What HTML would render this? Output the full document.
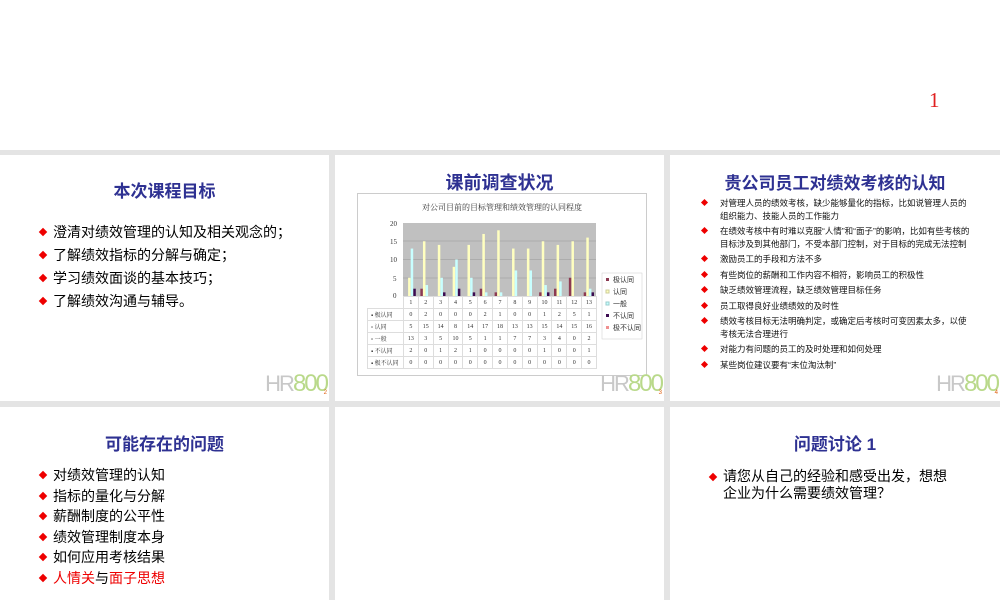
<!DOCTYPE html>
<html><head><meta charset="utf-8"><style>
body{margin:0;width:1000px;height:600px;background:#e4e4e4;position:relative;overflow:hidden;font-family:"Liberation Sans","Noto Sans CJK SC",sans-serif}
.p{position:absolute;background:#fff;overflow:hidden}
.t{position:absolute;left:0;right:0;text-align:center;color:#2e3192;font-weight:bold;font-size:17px}
.l{position:absolute;font-size:14px;color:#000;line-height:23px}
.l div{position:relative;padding-left:13px}
.d{position:absolute;left:0;top:8px;width:6px;height:6px;background:#e00;transform:rotate(45deg)}
.s{position:absolute;left:30px;top:42px;width:272px;font-size:8.5px;line-height:12.5px;color:#111}
.s div{position:relative;padding-left:20px;margin-bottom:3px}
.s .d{left:2px;top:3px;width:5px;height:5px}
.logo{position:absolute;right:2px;bottom:3px;font-size:22px;color:#c8c8c8;letter-spacing:-2px}
.logo b{color:#b9d98a;font-weight:normal;font-size:24px}
.logo i{position:absolute;right:2px;bottom:2px;font-size:6px;color:#e06010;font-style:normal}
table{border-collapse:collapse;font-family:"Liberation Serif","Noto Serif CJK SC",serif;font-size:6px;color:#333;table-layout:fixed}
td{border:1px solid #ddd;height:12px;text-align:center;padding:0;width:14.85px;box-sizing:border-box}
td.h{width:36px;text-align:left;padding-left:3px;white-space:nowrap}
</style></head><body>
<div class="p" style="left:0;top:0;width:1000px;height:150px"><div style="position:absolute;left:929px;top:88px;color:#e02020;font-family:'Liberation Serif',serif;font-size:21px">1</div></div>

<div class="p" style="left:0;top:155px;width:329px;height:246px">
<div class="t" style="top:22px">本次课程目标</div>
<div class="l" style="left:40px;top:66px">
<div><span class="d"></span>澄清对绩效管理的认知及相关观念的；</div>
<div><span class="d"></span>了解绩效指标的分解与确定；</div>
<div><span class="d"></span>学习绩效面谈的基本技巧；</div>
<div><span class="d"></span>了解绩效沟通与辅导。</div></div>
<div class="logo">HR<b>800</b><i>2</i></div></div>

<div class="p" style="left:335px;top:155px;width:329px;height:246px">
<div class="t" style="top:14px;font-size:18px">课前调查状况</div>
<div style="position:absolute;left:22px;top:38px;width:288px;height:181px;border:1px solid #ccc">
<div style="position:absolute;top:8px;left:0;right:0;text-align:center;font-family:'Liberation Serif','Noto Serif CJK SC',serif;font-size:8px;color:#333">对公司目前的目标管理和绩效管理的认同程度</div>
<svg id="ch" width="288" height="181" style="position:absolute;left:0;top:0" font-family="Liberation Serif" font-size="7" fill="#333">
<rect x="45" y="29" width="193" height="73" fill="#c0c0c0"/>
<g stroke="#999" stroke-width="0.5"><line x1="45" y1="47" x2="238" y2="47"/><line x1="45" y1="65.5" x2="238" y2="65.5"/><line x1="45" y1="84" x2="238" y2="84"/></g>
<text x="32" y="32">20</text><text x="32" y="50">15</text><text x="32" y="68">10</text><text x="35" y="87">5</text><text x="35" y="104">0</text>
<g id="bars"></g>
<rect x="244" y="79" width="40" height="66" fill="#fff" stroke="#ccc" stroke-width="0.5"/>
<rect x="248" y="84" width="3" height="3" fill="#8b3a52"/><text x="255" y="88">极认同</text>
<rect x="248" y="96" width="3" height="3" fill="#ffffc0" stroke="#cc9"/><text x="255" y="100">认同</text>
<rect x="248" y="108" width="3" height="3" fill="#c8ffff" stroke="#9cc"/><text x="255" y="112">一般</text>
<rect x="248" y="120" width="3" height="3" fill="#3c0c50"/><text x="255" y="124">不认同</text>
<rect x="248" y="132" width="3" height="3" fill="#f09090"/><text x="255" y="136">极不认同</text>
</svg>
<table style="position:absolute;left:9px;top:102px;width:229px">
<tr><td class="h" style="border:none"></td><td>1</td><td>2</td><td>3</td><td>4</td><td>5</td><td>6</td><td>7</td><td>8</td><td>9</td><td>10</td><td>11</td><td>12</td><td>13</td></tr>
<tr><td class="h">▪ 极认同</td><td>0</td><td>2</td><td>0</td><td>0</td><td>0</td><td>2</td><td>1</td><td>0</td><td>0</td><td>1</td><td>2</td><td>5</td><td>1</td></tr>
<tr><td class="h">▫ 认同</td><td>5</td><td>15</td><td>14</td><td>8</td><td>14</td><td>17</td><td>18</td><td>13</td><td>13</td><td>15</td><td>14</td><td>15</td><td>16</td></tr>
<tr><td class="h">▫ 一般</td><td>13</td><td>3</td><td>5</td><td>10</td><td>5</td><td>1</td><td>1</td><td>7</td><td>7</td><td>3</td><td>4</td><td>0</td><td>2</td></tr>
<tr><td class="h">▪ 不认同</td><td>2</td><td>0</td><td>1</td><td>2</td><td>1</td><td>0</td><td>0</td><td>0</td><td>0</td><td>1</td><td>0</td><td>0</td><td>1</td></tr>
<tr><td class="h">▪ 极不认同</td><td>0</td><td>0</td><td>0</td><td>0</td><td>0</td><td>0</td><td>0</td><td>0</td><td>0</td><td>0</td><td>0</td><td>0</td><td>0</td></tr>
</table></div>
<div class="logo">HR<b>800</b><i>3</i></div></div>

<div class="p" style="left:670px;top:155px;width:330px;height:246px">
<div class="t" style="top:14px;font-size:17px">贵公司员工对绩效考核的认知</div>
<div class="s">
<div><span class="d"></span>对管理人员的绩效考核，缺少能够量化的指标，比如说管理人员的组织能力、技能人员的工作能力</div>
<div><span class="d"></span>在绩效考核中有时难以克服“人情”和“面子”的影响，比如有些考核的目标涉及到其他部门，不受本部门控制，对于目标的完成无法控制</div>
<div><span class="d"></span>激励员工的手段和方法不多</div>
<div><span class="d"></span>有些岗位的薪酬和工作内容不相符，影响员工的积极性</div>
<div><span class="d"></span>缺乏绩效管理流程，缺乏绩效管理目标任务</div>
<div><span class="d"></span>员工取得良好业绩绩效的及时性</div>
<div><span class="d"></span>绩效考核目标无法明确判定，或确定后考核时可变因素太多，以使考核无法合理进行</div>
<div><span class="d"></span>对能力有问题的员工的及时处理和如何处理</div>
<div><span class="d"></span>某些岗位建议要有“末位淘汰制”</div></div>
<div class="logo">HR<b>800</b><i>4</i></div></div>

<div class="p" style="left:0;top:407px;width:329px;height:193px">
<div class="t" style="top:23px">可能存在的问题</div>
<div class="l" style="left:40px;top:58px;line-height:20.5px">
<div><span class="d" style="top:7px"></span>对绩效管理的认知</div>
<div><span class="d" style="top:7px"></span>指标的量化与分解</div>
<div><span class="d" style="top:7px"></span>薪酬制度的公平性</div>
<div><span class="d" style="top:7px"></span>绩效管理制度本身</div>
<div><span class="d" style="top:7px"></span>如何应用考核结果</div>
<div><span class="d" style="top:7px"></span><span style="color:#e00">人情关</span>与<span style="color:#e00">面子思想</span></div></div></div>

<div class="p" style="left:335px;top:407px;width:329px;height:193px"></div>

<div class="p" style="left:670px;top:407px;width:330px;height:193px">
<div class="t" style="top:23px">问题讨论 1</div>
<div class="l" style="left:40px;top:61px;line-height:17px;font-size:14px">
<div><span class="d" style="top:6px"></span>请您从自己的经验和感受出发，想想<br>企业为什么需要绩效管理？</div></div></div>

<script>
var d=[[0,2,0,0,0,2,1,0,0,1,2,5,1],[5,15,14,8,14,17,18,13,13,15,14,15,16],[13,3,5,10,5,1,1,7,7,3,4,0,2],[2,0,1,2,1,0,0,0,0,1,0,0,1]];
var c=['#8b3a52','#ffffc0','#c8ffff','#3c0c50'];var h='';
for(var i=0;i<13;i++)for(var s=0;s<4;s++){var v=d[s][i];if(!v)continue;var x=45+i*14.85+2.5+s*2.6,hh=v*3.65;h+='<rect x="'+x+'" y="'+(102-hh)+'" width="2.5" height="'+hh+'" fill="'+c[s]+'"/>';}
document.getElementById('bars').innerHTML=h;
</script>
</body></html>
